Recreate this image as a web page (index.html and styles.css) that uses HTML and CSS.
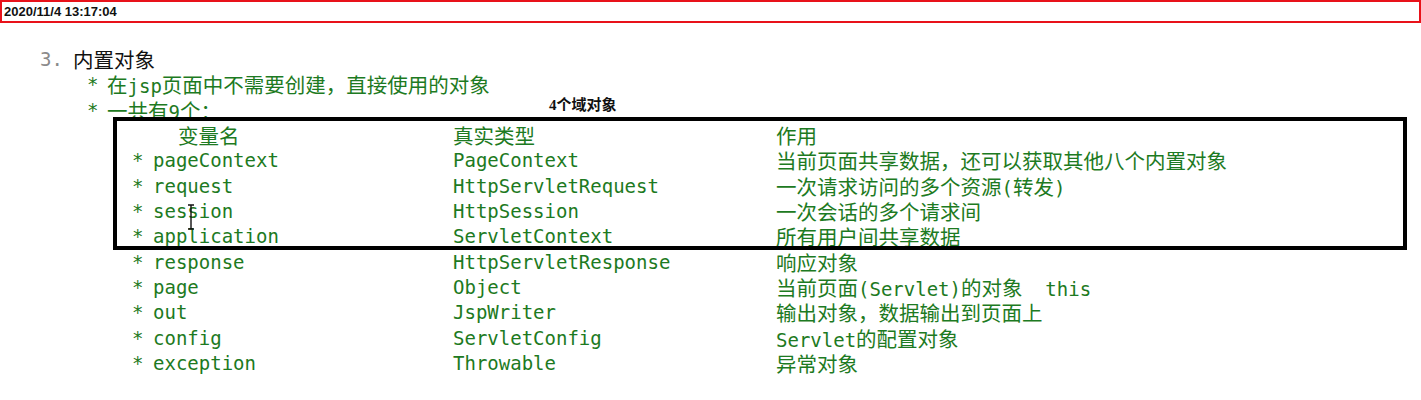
FILE: index.html
```html
<!DOCTYPE html>
<html lang="zh">
<head>
<meta charset="utf-8">
<link rel="stylesheet" href="styles.css">
</head>
<body>
<div class="stamp">2020/11/4 13:17:04</div>
<div class="doc">
  <div class="line l1"><span class="num">3.</span><span class="zh title">内置对象</span></div>
  <div class="line l2"><span class="star">*</span><span><span class="zh">在</span>jsp<span class="zh">页面中不需要创建，直接使用的对象</span></span></div>
  <div class="line l2"><span class="star">*</span><span><span class="zh">一共有</span>9<span class="zh">个：</span></span></div>
  <div class="table">
    <span></span><span class="hname zh">变量名</span><span class="zh">真实类型</span><span class="zh">作用</span>
    <span>*</span><span>pageContext</span><span>PageContext</span><span class="zh">当前页面共享数据，还可以获取其他八个内置对象</span>
    <span>*</span><span>request</span><span>HttpServletRequest</span><span><span class="zh">一次请求访问的多个资源</span>(<span class="zh">转发</span>)</span>
    <span>*</span><span>session</span><span>HttpSession</span><span class="zh">一次会话的多个请求间</span>
    <span>*</span><span>application</span><span>ServletContext</span><span class="zh">所有用户间共享数据</span>
    <span>*</span><span>response</span><span>HttpServletResponse</span><span class="zh">响应对象</span>
    <span>*</span><span>page</span><span>Object</span><span><span class="zh">当前页面</span>(Servlet)<span class="zh">的对象</span>&nbsp;&nbsp;this</span>
    <span>*</span><span>out</span><span>JspWriter</span><span class="zh">输出对象，数据输出到页面上</span>
    <span>*</span><span>config</span><span>ServletConfig</span><span>Servlet<span class="zh">的配置对象</span></span>
    <span>*</span><span>exception</span><span>Throwable</span><span class="zh">异常对象</span>
  </div>
  <div class="note">4个域对象</div>
  <div class="frame"></div>
  <svg class="cursor" width="8" height="26" viewBox="0 0 8 26"><path d="M1 1h6M4 1v24M1 25h6" stroke="#111" stroke-width="1.4" fill="none"/></svg>
</div>
</body>
</html>
```

FILE: styles.css
```css
html, body {
  margin: 0;
  padding: 0;
  background: #fff;
}
.stamp {
  box-sizing: border-box;
  height: 23px;
  border: 2px solid #e8121a;
  padding: 1px 0 0 2px;
  font-family: "Liberation Sans", Arial, sans-serif;
  font-weight: bold;
  font-size: 13px;
  line-height: 17px;
  color: #111;
}
.doc {
  position: relative;
  padding-top: 24px;
  font-family: "DejaVu Sans Mono", "Liberation Mono", monospace;
  font-size: 19px;
  line-height: 25.33px;
  color: #1d7a22;
  white-space: nowrap;
}
.zh {
  font-family: "Noto Sans CJK SC", sans-serif;
  font-size: 20.5px;
}
.line {
  display: flex;
  height: 25.33px;
}
.l1 {
  padding-left: 40px;
}
.num {
  color: #8a8a8a;
  width: 33px;
}
.title {
  color: #111;
}
.l2 {
  padding-left: 87px;
}
.star {
  width: 20px;
}
.table {
  display: grid;
  grid-template-columns: 21px 300px 323px auto;
  grid-auto-rows: 25.33px;
  padding-left: 132px;
}
.hname {
  padding-left: 25px;
}
.note {
  position: absolute;
  left: 549px;
  top: 72px;
  font-family: "Liberation Serif", "Noto Sans CJK SC", serif;
  font-weight: bold;
  font-size: 15px;
  line-height: 20px;
  color: #111;
}
.frame {
  position: absolute;
  left: 113px;
  top: 94px;
  width: 1294px;
  height: 133px;
  box-sizing: border-box;
  border: 4px solid #000;
}
.cursor {
  position: absolute;
  left: 187px;
  top: 181px;
}
```
